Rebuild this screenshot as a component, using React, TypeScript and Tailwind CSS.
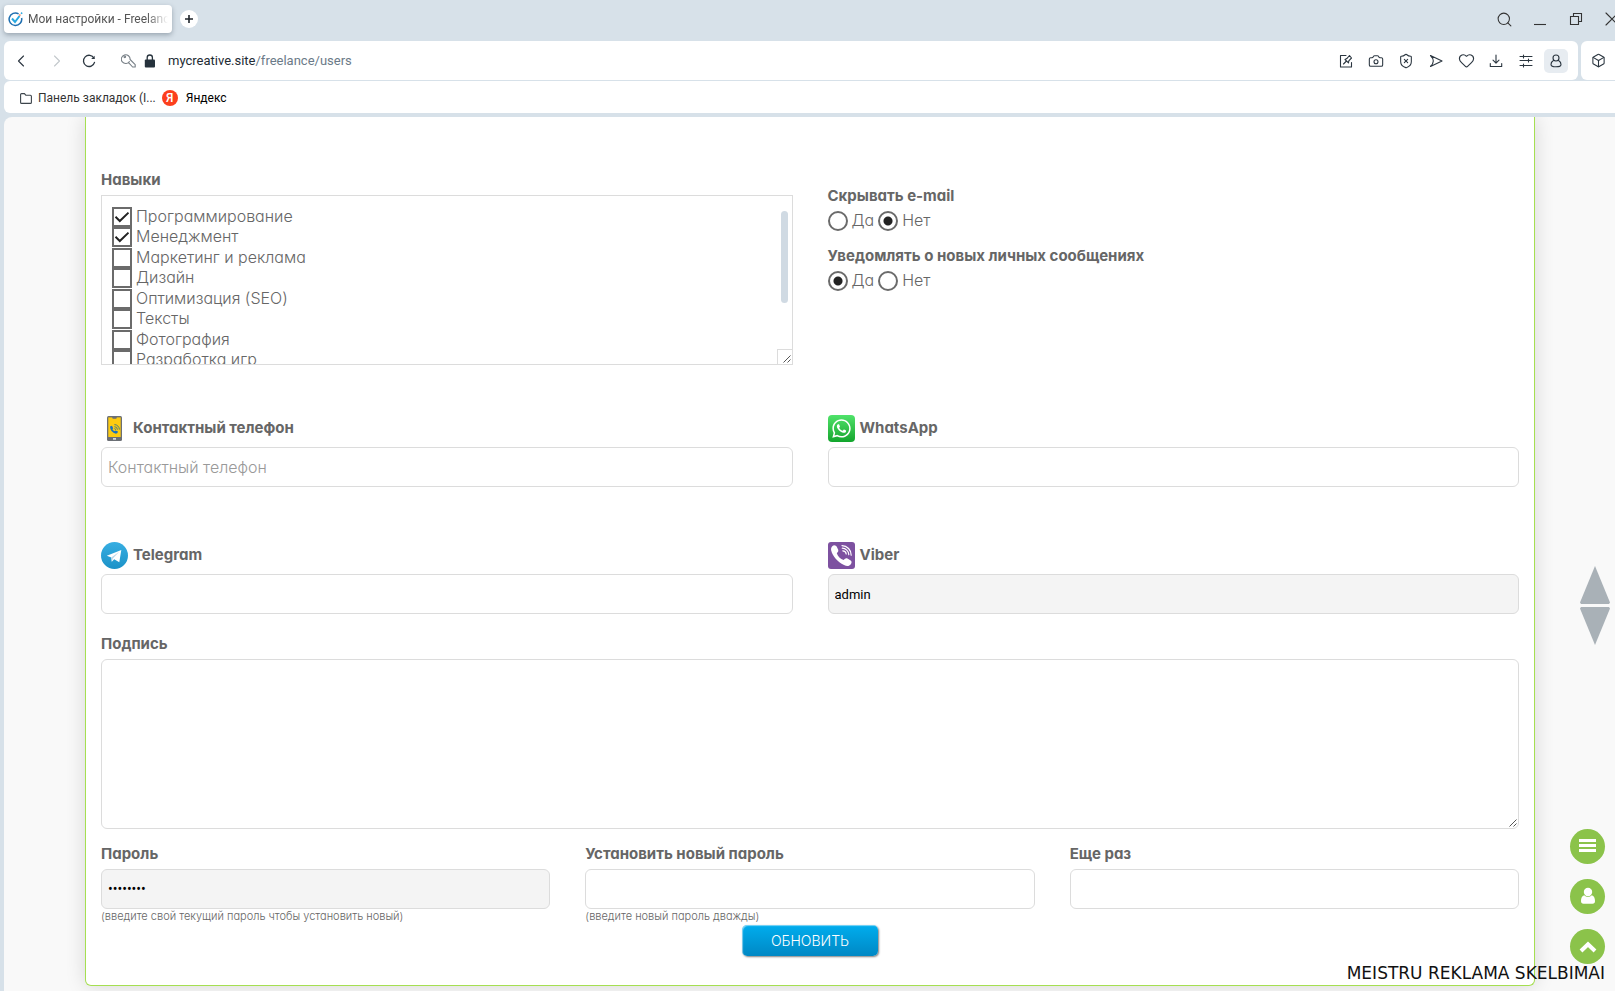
import type { ReactNode, SVGProps } from "react";
import { Box, Camera, Heart, Search, ShieldX } from "lucide-react";
import { FaWhatsapp } from "react-icons/fa";

const skills = [
  { name: "Программирование", checked: true },
  { name: "Менеджмент", checked: true },
  { name: "Маркетинг и реклама", checked: false },
  { name: "Дизайн", checked: false },
  { name: "Оптимизация (SEO)", checked: false },
  { name: "Тексты", checked: false },
  { name: "Фотография", checked: false },
  { name: "Разработка игр", checked: false },
];

const fieldClass =
  "block h-10 w-full rounded-[6px] border border-[#dcdcdc] bg-white px-1.5 text-[16px] font-light text-black outline-none placeholder:text-[#999999]";
const filledFieldClass =
  "block h-10 w-full rounded-[6px] border border-[#dcdcdc] bg-[#f4f4f4] px-1.5 font-[Roboto,sans-serif] font-normal text-black outline-none";

function Line(props: SVGProps<SVGSVGElement>) {
  return (
    <svg
      width="16"
      height="16"
      viewBox="0 0 16 16"
      fill="none"
      stroke="currentColor"
      strokeWidth="1.1"
      strokeLinecap="round"
      strokeLinejoin="round"
      aria-hidden="true"
      {...props}
    />
  );
}

function Grip({ className }: { className: string }) {
  return (
    <svg className={className} width="8" height="8" viewBox="0 0 8 8" stroke="#555" aria-hidden="true">
      <path d="M0.5 7.5 7.5 0.5M4.5 7.5 7.5 4.5" />
    </svg>
  );
}

function BarButton({ label, active, children }: { label: string; active?: boolean; children: ReactNode }) {
  return (
    <button
      type="button"
      aria-label={label}
      className={
        active
          ? "flex size-6 items-center justify-center rounded-[5px] bg-[#e7ecf1]"
          : "flex size-6 items-center justify-center rounded-[5px]"
      }
    >
      {children}
    </button>
  );
}

function WindowButton({ label, children }: { label: string; children: ReactNode }) {
  return (
    <button type="button" aria-label={label} className="flex h-9 w-9 shrink-0 items-center justify-center">
      {children}
    </button>
  );
}

function Browser() {
  return (
    <header className="overflow-hidden pb-1 font-[Roboto,sans-serif] text-[#2b3640]">
      <div className="flex h-[41px] items-center pb-[3px] pl-1">
        <div className="flex h-7 w-[168px] items-center gap-[5px] rounded-[4px] bg-white px-1 shadow-[0_2px_5px_rgba(60,75,90,0.4)]">
          <svg className="shrink-0" width="15" height="15" viewBox="0 0 15 15" fill="none" aria-hidden="true">
            <path d="M10.6 1.8A6.3 6.3 0 1 0 13.6 6" stroke="#1f6fb0" strokeWidth="1.5" />
            <path d="M4 6.5 7 10 11.5 4" stroke="#28a8e0" strokeWidth="2" />
            <path d="M11.3 3.6 12.4 2.5" stroke="#f08060" strokeWidth="1.6" />
            <path d="M13 1.8 14.2 0.6" stroke="#28a8e0" strokeWidth="1.5" />
          </svg>
          <span className="flex-1 overflow-hidden whitespace-nowrap text-[12px] text-[#555] [mask-image:linear-gradient(to_right,#000_85%,transparent)]">
            Мои настройки - Freelanc
          </span>
        </div>
        <button type="button" aria-label="Новая вкладка" className="ml-2 flex size-[18px] items-center justify-center rounded-full bg-white">
          <svg width="8" height="8" viewBox="0 0 8 8" stroke="#20262c" strokeWidth="1.6" aria-hidden="true">
            <path d="M4 0V8M0 4H8" />
          </svg>
        </button>
        <div className="-mr-[15px] ml-auto flex text-[#333]">
          <WindowButton label="Поиск"><Search size={17} strokeWidth={1.5} /></WindowButton>
          <WindowButton label="Свернуть">
            <Line strokeLinecap="butt"><path d="M2 13.5H14" /></Line>
          </WindowButton>
          <WindowButton label="Развернуть">
            <Line strokeLinejoin="miter"><path d="M2.5 5.5H10.5V13.5H2.5ZM5.5 5.5V2.5H13.5V10.5H10.5" /></Line>
          </WindowButton>
          <WindowButton label="Закрыть">
            <Line><path d="M2 2 14 14M14 2 2 14" /></Line>
          </WindowButton>
        </div>
      </div>

      <div className="flex h-[39px] gap-[3px] pl-1">
        <div className="flex flex-1 items-center rounded-[6px] bg-white pr-2.5 pl-[5px]">
          <div className="flex gap-1.5">
            <BarButton label="Назад"><Line><path d="M10.5 3 5.5 8 10.5 13" /></Line></BarButton>
            <span className="flex pr-0.5 pl-1.5 text-[#c3c8cc]">
              <BarButton label="Вперёд"><Line><path d="M5.5 3 10.5 8 5.5 13" /></Line></BarButton>
            </span>
            <BarButton label="Обновить страницу">
              <Line strokeWidth="1.3"><path d="M13 5.2A5.6 5.6 0 1 0 13.5 9.3" /><path d="M13.6 2.8V6H10.2Z" fill="currentColor" stroke="none" /></Line>
            </BarButton>
          </div>
          <svg className="ml-5" width="15" height="15" viewBox="0 0 15 15" fill="none" stroke="#777f86" strokeWidth="1.1" aria-hidden="true">
            <path d="M8.6 8.2A4.4 4.4 0 1 1 9.1 6.5L14.2 11.6V14H11.6L7.6 9.6" strokeLinejoin="round" />
            <circle cx="3.8" cy="3.8" r="0.8" />
          </svg>
          <svg className="ml-2" width="12" height="14" viewBox="0 0 12 14" aria-hidden="true">
            <path d="M3.2 6V3.6a2.6 2.6 0 0 1 5.2 0V6" fill="none" stroke="#26323c" strokeWidth="1.3" />
            <rect x="0.8" y="5.4" width="10.2" height="8.2" rx="1" fill="#26323c" />
          </svg>
          <a href="#users" className="ml-3 text-[13px] text-[#6b7a88]">
            <span className="text-[#222b33]">mycreative.site</span>/freelance/users
          </a>
          <div className="ml-auto flex gap-1.5">
            <BarButton label="Заметка">
              <Line><path d="M8 2.5H2.5V14H13.5V9.5M5.5 11 8 8.5M7 6.5 10.5 9.8 10.8 7.8 13.5 5 11.5 2.5 8.8 5.6Z" /></Line>
            </BarButton>
            <BarButton label="Снимок экрана"><Camera size={16} strokeWidth={1.6} /></BarButton>
            <BarButton label="Защита"><ShieldX size={16} strokeWidth={1.6} /></BarButton>
            <BarButton label="Отправить">
              <Line><path d="M2.5 2.5 14 8 2.5 13.5C4.5 11.5 5.3 10 5.3 8S4.5 4.5 2.5 2.5Z" /></Line>
            </BarButton>
            <BarButton label="Избранное"><Heart size={17} strokeWidth={1.6} /></BarButton>
            <BarButton label="Загрузки">
              <Line><path d="M8 2V10M5 7.2 8 10.2 11 7.2M2.3 10.5V13.5H13.7V10.5" /></Line>
            </BarButton>
            <BarButton label="Настройки">
              <Line><path d="M2 3.5H14M2 7.5H14M2 12.5H14M5.5 2V5M10.5 6V9M5.5 11V14" /></Line>
            </BarButton>
            <BarButton label="Профиль" active>
              <Line><circle cx="8" cy="5" r="3" /><path d="M5.7 7.2C3.6 8.4 3 10 3 11.5 3 13.4 5 13.8 8 13.8S13 13.4 13 11.5C13 10 12.4 8.4 10.3 7.2" /></Line>
            </BarButton>
          </div>
        </div>
        <div className="flex w-[34px] items-center rounded-l-[6px] bg-white pl-[5px]">
          <BarButton label="Расширения"><Box size={15} strokeWidth={1.7} /></BarButton>
        </div>
      </div>

      <nav className="mt-px ml-1 flex h-8 items-center gap-1.5 rounded-l-[6px] bg-white pt-0.5 pl-4 text-[12px] text-[#333]">
        <a href="#bookmarks" className="flex items-center gap-1.5">
          <svg width="12" height="11" viewBox="0 0 12 11" fill="none" stroke="#3c444b" strokeWidth="1.1" aria-hidden="true">
            <path d="M0.6 9.4V1.6Q0.6 0.6 1.6 0.6H4.4L5.8 2.2H10.4Q11.4 2.2 11.4 3.2V9.4Q11.4 10.4 10.4 10.4H1.6Q0.6 10.4 0.6 9.4Z" />
          </svg>
          <span>Панель закладок (I...</span>
        </a>
        <a href="#yandex" className="flex items-center gap-2 text-black">
          <span className="flex size-4 items-center justify-center rounded-full bg-[#fc3f1d] text-[12px] font-medium text-white">Я</span>
          <span>Яндекс</span>
        </a>
      </nav>
    </header>
  );
}

function Label({ htmlFor, children }: { htmlFor?: string; children: ReactNode }) {
  return (
    <label htmlFor={htmlFor} className="mb-1 block h-6 text-[15px] leading-[26px] font-bold text-[#666]">
      {children}
    </label>
  );
}

function Choice({ name, value }: { name: string; value: "Да" | "Нет" }) {
  return (
    <div className="flex gap-1">
      {["Да", "Нет"].map((text) => (
        <label key={text} className="flex h-5 items-start gap-1 leading-[18px]">
          <input
            type="radio"
            name={name}
            defaultChecked={text === value}
            className="size-5 appearance-none rounded-full border-2 border-[#6b6b6b] bg-white checked:bg-[radial-gradient(circle,#222_4px,transparent_5px)]"
          />
          {text}
        </label>
      ))}
    </div>
  );
}

function Contact({ id, title, icon, children }: { id: string; title: string; icon: ReactNode; children: ReactNode }) {
  return (
    <div>
      <label htmlFor={id} className="mb-[5px] flex h-[27px] gap-[5px] text-[15px] leading-[26px] font-bold text-[#666]">
        {icon}
        {title}
      </label>
      {children}
    </div>
  );
}

function PhoneIcon() {
  return (
    <svg width="27" height="27" viewBox="0 0 27 27" aria-hidden="true">
      <rect x="6" y="1" width="15" height="25" rx="1.5" fill="#6b6f75" />
      <rect x="7.3" y="2.4" width="12.4" height="19.6" fill="#fdcb10" />
      <path d="M11 1.8H16L15.3 3.7H11.7Z" fill="#6b6f75" />
      <rect x="12" y="23.2" width="3" height="1.4" fill="#eee" />
      <path d="M9 11.6 11 10.8 12.2 13.3 11.4 14.2Q12.2 15.6 13.6 16.2L14.5 15.4 17 16.6Q16.8 18.6 15 18.8 9.4 17.8 9 11.6Z" fill="#176fc1" />
      <path d="M13.4 9.6a5 5 0 0 1 5 5M13.4 11.7a3 3 0 0 1 3 3M13.4 13.6a1.2 1.2 0 0 1 1.2 1.2" fill="none" stroke="#4b7c7b" strokeWidth="1" />
    </svg>
  );
}

function TelegramIcon() {
  return (
    <svg width="27" height="27" viewBox="0 0 27 27" aria-hidden="true">
      <defs>
        <linearGradient id="tg" x2="0" y2="1"><stop stopColor="#37aee2" /><stop offset="1" stopColor="#1c92c7" /></linearGradient>
      </defs>
      <circle cx="13.5" cy="13.5" r="13.5" fill="url(#tg)" />
      <path d="M5.8 13.8 20.3 8 18.3 20.3 13.2 17.2 10.8 19.7 10.3 15.4Z" fill="#fff" />
      <path d="M10.3 15.4 18.2 9.8 11.8 16.4 10.8 19.7Z" fill="#bcd6e8" />
    </svg>
  );
}

function FloatingControls() {
  return (
    <>
      <div className="absolute right-[5px] bottom-[346px] flex flex-col gap-[3px]">
        <button type="button" aria-label="Прокрутить вверх">
          <svg className="block" width="30" height="38" viewBox="0 0 30 38" fill="#a9b1b7"><path d="M15 0 30 36.5 29 38H1L0 36.5Z" /></svg>
        </button>
        <button type="button" aria-label="Прокрутить вниз">
          <svg className="block" width="30" height="38" viewBox="0 0 30 38" fill="#a9b1b7"><path d="M15 38 30 1.5 29 0H1L0 1.5Z" /></svg>
        </button>
      </div>
      <div className="absolute right-2.5 bottom-[27px] flex flex-col gap-[15px] text-white">
        <button type="button" aria-label="Меню" className="flex size-[35px] items-center justify-center rounded-full bg-[#8bc34a]">
          <svg width="17" height="15" viewBox="0 0 17 15" fill="currentColor"><path d="M0 0H17V3H0ZM0 5H17V8H0ZM0 10H17V13H0Z" /></svg>
        </button>
        <button type="button" aria-label="Пользователь" className="flex size-[35px] items-center justify-center rounded-full bg-[#8bc34a]">
          <svg width="14" height="19" viewBox="0 0 14 19" fill="currentColor"><circle cx="7" cy="5" r="4.2" /><path d="M3.2 8.2C1 8.8 0 11 0 14Q0 16.8 2.5 16.8H11.5Q14 16.8 14 14C14 11 13 8.8 10.8 8.2A5 5 0 0 1 3.2 8.2Z" /></svg>
        </button>
        <button type="button" aria-label="Наверх" className="flex size-[35px] items-center justify-center rounded-full bg-[#8bc34a]">
          <svg width="18" height="12" viewBox="0 0 18 12" fill="none" stroke="currentColor" strokeWidth="4"><path d="M2 10 9 3.2 16 10" /></svg>
        </button>
      </div>
      <p className="absolute right-2.5 bottom-1.5 font-['DejaVu_Sans',sans-serif] text-[17px] leading-6 text-[#111]">
        MEISTRU REKLAMA SKELBIMAI
      </p>
    </>
  );
}

export default function App() {
  return (
    <div className="relative flex min-h-screen flex-col bg-[#d7e1e9]">
      <Browser />
      <main className="ml-1 flex-1 overflow-hidden rounded-tl-[8px] bg-[#f9f9f9] pr-20 pb-[5px] pl-[81px] font-[Inter,sans-serif] text-[16px] [font-feature-settings:'cv11']">
        <form
          className="rounded-b-[6px] border border-t-0 border-[#a5df51] bg-white px-[15px] pt-[50px] pb-[29px] font-light text-[#666] shadow-[0_0_20px_rgba(0,0,0,0.14)]"
          onSubmit={(event) => event.preventDefault()}
        >
          <div className="grid grid-cols-2 gap-x-[35px]">
            <div>
              <Label>Навыки</Label>
              <div className="relative h-[170px] overflow-hidden border border-[#dcdcdc] px-2.5 pt-[11px]">
                <div className="grid auto-rows-[20px_21px]">
                  {skills.map((skill) => (
                    <label key={skill.name} className="flex items-start gap-1 leading-[18px] whitespace-nowrap">
                      <span className="grid shrink-0">
                        <input
                          type="checkbox"
                          defaultChecked={skill.checked}
                          className="peer col-start-1 row-start-1 size-5 appearance-none border-2 border-[#6b6b6b] bg-white"
                        />
                        <svg
                          className="pointer-events-none invisible col-start-1 row-start-1 peer-checked:visible"
                          width="20"
                          height="20"
                          viewBox="0 0 20 20"
                          fill="none"
                          stroke="#222"
                          strokeWidth="2"
                          aria-hidden="true"
                        >
                          <path d="M3.5 9.8 7.8 14 16.5 5.6" />
                        </svg>
                      </span>
                      {skill.name}
                    </label>
                  ))}
                </div>
                <div className="absolute top-[15px] right-1 h-[92px] w-[7px] rounded-full bg-[#d0dae3]" />
                <div className="absolute right-0 bottom-0 size-[15px] border-t border-l border-[#dcdcdc] bg-white">
                  <Grip className="absolute right-px bottom-px" />
                </div>
              </div>
            </div>
            <div className="flex flex-col gap-3 pt-4">
              <div>
                <Label>Скрывать e-mail</Label>
                <Choice name="hide-email" value="Нет" />
              </div>
              <div>
                <Label>Уведомлять о новых личных сообщениях</Label>
                <Choice name="notify" value="Да" />
              </div>
            </div>
          </div>

          <div className="mt-[50px] grid grid-cols-2 gap-x-[35px] gap-y-[55px]">
            <Contact id="phone" title="Контактный телефон" icon={<PhoneIcon />}>
              <input id="phone" type="tel" placeholder="Контактный телефон" className={fieldClass} />
            </Contact>
            <Contact
              id="whatsapp"
              title="WhatsApp"
              icon={
                <span className="flex size-[27px] items-center justify-center rounded-[4px] bg-linear-to-b from-[#4fe36a] to-[#10a52c] text-white">
                  <FaWhatsapp size={21} />
                </span>
              }
            >
              <input id="whatsapp" type="text" className={fieldClass} />
            </Contact>
            <Contact id="telegram" title="Telegram" icon={<TelegramIcon />}>
              <input id="telegram" type="text" className={fieldClass} />
            </Contact>
            <Contact
              id="viber"
              title="Viber"
              icon={
                <svg width="27" height="27" viewBox="0 0 27 27" aria-hidden="true">
                  <rect width="27" height="27" rx="3" fill="#7d51a0" />
                  <path d="M4.5 4C6 2.6 8 3.3 9 5.2L10.3 8Q10.8 9.6 8.8 11.2C9.8 14.2 12.4 17 15.6 18Q17.3 15.8 19 16.3L22.3 18.2Q24.6 19.8 22.8 22.2C21 24.6 18.6 24.2 16 23 9.5 20 4.7 14.5 3.2 8.6 2.8 6.5 3.2 5.2 4.5 4Z" fill="#fff" />
                  <path d="M14 3.6A9.5 9.5 0 0 1 23.2 13.2M14.3 6.2A6.8 6.8 0 0 1 20.8 12.6M14.8 8.9A3.6 3.6 0 0 1 18.2 12" fill="none" stroke="#fff" strokeWidth="1.2" strokeLinecap="round" />
                </svg>
              }
            >
              <input id="viber" type="text" defaultValue="admin" className={`${filledFieldClass} text-[13px]`} />
            </Contact>
          </div>

          <div className="mt-[17px]">
            <Label htmlFor="signature">Подпись</Label>
            <div className="relative">
              <textarea id="signature" className="block h-[170px] w-full resize-none rounded-[6px] border border-[#dcdcdc] bg-white p-1.5 outline-none" />
              <Grip className="absolute right-0.5 bottom-0.5" />
            </div>
          </div>

          <div className="mt-3 grid grid-cols-3 gap-x-[35px]">
            <div>
              <Label htmlFor="password">Пароль</Label>
              <input id="password" type="password" defaultValue="password" className={`${filledFieldClass} text-[14px]`} />
              <p className="text-[11px] leading-[14px]">(введите свой текущий пароль чтобы установить новый)</p>
            </div>
            <div>
              <Label htmlFor="new-password">Установить новый пароль</Label>
              <input id="new-password" type="password" className={fieldClass} />
              <p className="text-[11px] leading-[14px]">(введите новый пароль дважды)</p>
            </div>
            <div>
              <Label htmlFor="repeat-password">Еще раз</Label>
              <input id="repeat-password" type="password" className={fieldClass} />
            </div>
          </div>

          <button
            type="submit"
            className="mx-auto mt-0.5 block h-[31px] w-[136px] rounded-[5px] bg-linear-to-b from-[#00adee] to-[#0088c4] text-[14px] font-light text-white shadow-[1px_1px_2px_rgba(0,0,0,0.5),inset_1px_1px_1px_rgba(255,255,255,0.5)]"
          >
            ОБНОВИТЬ
          </button>
        </form>
      </main>
      <FloatingControls />
    </div>
  );
}
